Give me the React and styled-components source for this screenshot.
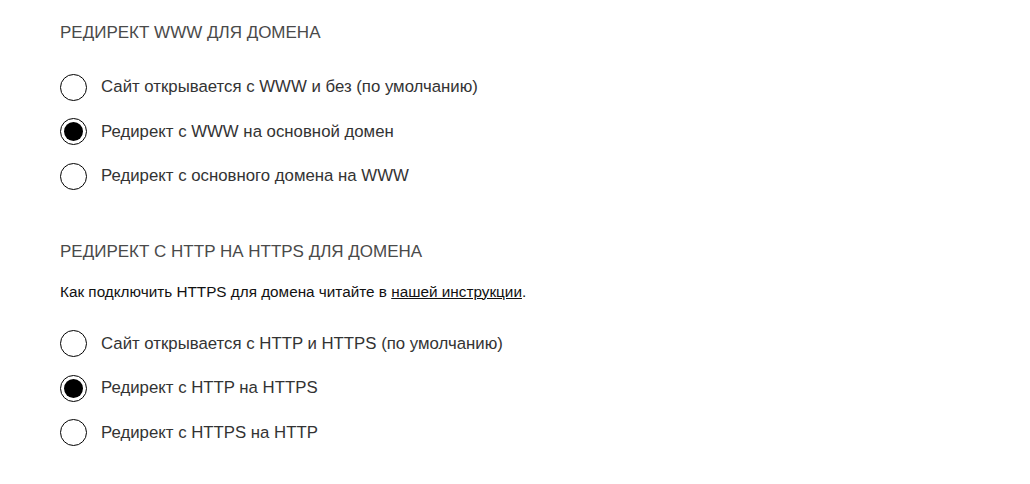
import React, { useState } from "react";
import styled, { createGlobalStyle } from "styled-components";

const GlobalStyle = createGlobalStyle`
  body {
    margin: 0;
    background: #fff;
    font-family: "Liberation Sans", Arial, sans-serif;
  }
`;

const Page = styled.div`
  padding: 22px 0 0 60px;
`;

const Section = styled.section`
  margin-bottom: 51px;
`;

const Title = styled.h3`
  margin: 0 0 19px;
  font-size: 17px;
  font-weight: 400;
  line-height: 22px;
  color: #4a4a4a;
  text-transform: uppercase;
`;

const Note = styled.p`
  margin: 0 0 18px;
  font-size: 15.3px;
  line-height: 20px;
  color: #111;

  a {
    color: #111;
    text-decoration: underline;
  }
`;

const Options = styled.div`
  display: flex;
  flex-direction: column;
  gap: 17.5px;
  padding-top: 10.5px;
`;

const Option = styled.label`
  display: flex;
  align-items: center;
  gap: 14px;
  height: 27px;
  font-size: 16.8px;
  color: #333;
  cursor: pointer;
`;

const Circle = styled.span`
  box-sizing: border-box;
  width: 27px;
  height: 27px;
  border-radius: 50%;
  border: 1.5px solid #000;
  display: flex;
  align-items: center;
  justify-content: center;

  &::after {
    content: "";
    width: 19px;
    height: 19px;
    border-radius: 50%;
    background: ${(p) => (p.$checked ? "#000" : "transparent")};
  }
`;

const RadioGroup = ({ items, value, onChange }) => (
  <Options>
    {items.map((label, i) => (
      <Option key={label} onClick={() => onChange(i)}>
        <Circle $checked={value === i} />
        {label}
      </Option>
    ))}
  </Options>
);

const App = () => {
  const [www, setWww] = useState(1);
  const [https, setHttps] = useState(1);

  return (
    <>
      <GlobalStyle />
      <Page>
        <Section>
          <Title>Редирект WWW для домена</Title>
          <RadioGroup
            value={www}
            onChange={setWww}
            items={[
              "Сайт открывается с WWW и без (по умолчанию)",
              "Редирект с WWW на основной домен",
              "Редирект с основного домена на WWW",
            ]}
          />
        </Section>
        <Section>
          <Title>Редирект с HTTP на HTTPS для домена</Title>
          <Note>
            Как подключить HTTPS для домена читайте в <a href="#">нашей инструкции</a>.
          </Note>
          <RadioGroup
            value={https}
            onChange={setHttps}
            items={[
              "Сайт открывается с HTTP и HTTPS (по умолчанию)",
              "Редирект с HTTP на HTTPS",
              "Редирект с HTTPS на HTTP",
            ]}
          />
        </Section>
      </Page>
    </>
  );
};

export default App;
